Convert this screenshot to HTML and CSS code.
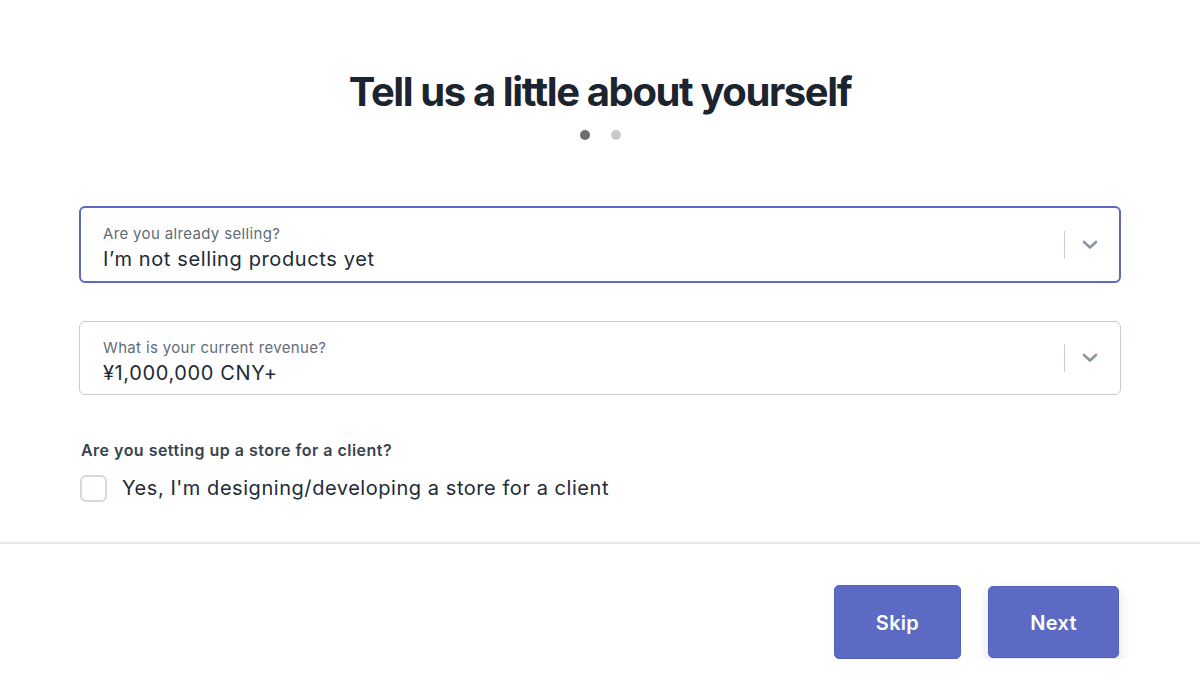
FILE: index.html
```html
<!DOCTYPE html>
<html lang="en">
<head>
    <meta charset="UTF-8">
    <meta name="viewport" content="width=device-width, initial-scale=1.0">
    <title>Tell us a little about yourself</title>
    <link rel="stylesheet" href="styles.css">
</head>
<body>
    <div class="container">
        <h1>Tell us a little about yourself</h1>
        <div class="steps">
            <span class="dot active"></span>
            <span class="dot"></span>
        </div>

        <div class="field focused">
            <div class="field-text">
                <div class="field-label">Are you already selling?</div>
                <div class="field-value">I’m not selling products yet</div>
            </div>
            <div class="field-arrow">
                <span class="divider"></span>
                <svg width="16" height="10" viewBox="0 0 16 10"><path d="M2 2l6 5.5L14 2" fill="none" stroke="#8a96a3" stroke-width="2.6" stroke-linecap="round" stroke-linejoin="round"/></svg>
            </div>
        </div>

        <div class="field">
            <div class="field-text">
                <div class="field-label">What is your current revenue?</div>
                <div class="field-value">¥1,000,000 CNY+</div>
            </div>
            <div class="field-arrow">
                <span class="divider"></span>
                <svg width="16" height="10" viewBox="0 0 16 10"><path d="M2 2l6 5.5L14 2" fill="none" stroke="#8a96a3" stroke-width="2.6" stroke-linecap="round" stroke-linejoin="round"/></svg>
            </div>
        </div>

        <div class="question">Are you setting up a store for a client?</div>
        <label class="check">
            <span class="box"></span>
            <span>Yes, I'm designing/developing a store for a client</span>
        </label>
    </div>

    <div class="footer">
        <div class="actions">
            <button class="btn">Skip</button>
            <button class="btn raised">Next</button>
        </div>
    </div>
</body>
</html>
```

FILE: styles.css
```css
body {
    font-family: Inter, "Noto Sans", sans-serif;
    background-color: #fff;
    margin: 0;
    padding: 0;
    color: #212b36;
}

.container {
    width: 1042px;
    margin: 0 auto;
    padding-top: 68px;
}

h1 {
    margin: 0;
    text-align: center;
    font-size: 40px;
    line-height: 48px;
    font-weight: 700;
    letter-spacing: -1.4px;
    color: #1c2430;
}

.steps {
    display: flex;
    justify-content: center;
    gap: 21px;
    margin-top: 14px;
}

.dot {
    width: 10px;
    height: 10px;
    border-radius: 50%;
    background-color: #c9c9c9;
}

.dot.active {
    background-color: #6d6d6d;
}

.field {
    display: flex;
    align-items: center;
    box-sizing: border-box;
    height: 74px;
    margin-top: 38px;
    padding: 0 22px 0 23px;
    border: 1px solid #c4cdd5;
    border-radius: 6px;
}

.field.focused {
    height: 77px;
    margin-top: 66px;
    border: 2px solid #5c6ac4;
    padding-left: 22px;
    padding-right: 21px;
}

.field-text {
    flex: 1;
    padding-top: 7px;
}

.field-label {
    font-size: 15px;
    line-height: 20px;
    letter-spacing: 0.35px;
    color: #5f6b78;
}

.field-value {
    font-size: 20px;
    line-height: 26px;
    letter-spacing: 0.62px;
    color: #212b36;
    margin-top: 2px;
}

.field-arrow {
    display: flex;
    align-items: center;
    gap: 17px;
}

.divider {
    width: 1px;
    height: 28px;
    background-color: #c4cdd5;
}

.question {
    margin-top: 44px;
    padding-left: 2px;
    font-size: 16px;
    font-weight: 600;
    line-height: 22px;
    letter-spacing: 0.48px;
    color: #3a434e;
}

.check {
    display: flex;
    align-items: center;
    gap: 15px;
    margin-top: 13px;
    font-size: 20px;
    line-height: 28px;
    letter-spacing: 0.55px;
    color: #212b36;
}

.box {
    box-sizing: border-box;
    width: 27px;
    height: 27px;
    margin-left: 1px;
    border: 2px solid #d3d9df;
    border-radius: 6px;
    background-color: #fff;
}

.footer {
    margin-top: 40px;
    border-top: 2px solid #e6e9ec;
}

.actions {
    width: 1042px;
    margin: 0 auto;
    display: flex;
    justify-content: flex-end;
    gap: 27px;
    padding-top: 41px;
}

.btn {
    width: 127px;
    height: 74px;
    padding: 2px 0 0;
    background-color: #5c6ac4;
    color: #fff;
    border: 1px solid #5563bd;
    border-radius: 5px;
    font-family: Inter, "Noto Sans", sans-serif;
    font-size: 20px;
    font-weight: 600;
    letter-spacing: 0.3px;
    cursor: pointer;
}

.btn.raised {
    width: 131px;
    height: 72px;
    margin-top: 1px;
    margin-right: 2px;
    box-shadow: 0 6px 14px rgba(0, 0, 0, 0.13);
}
```
